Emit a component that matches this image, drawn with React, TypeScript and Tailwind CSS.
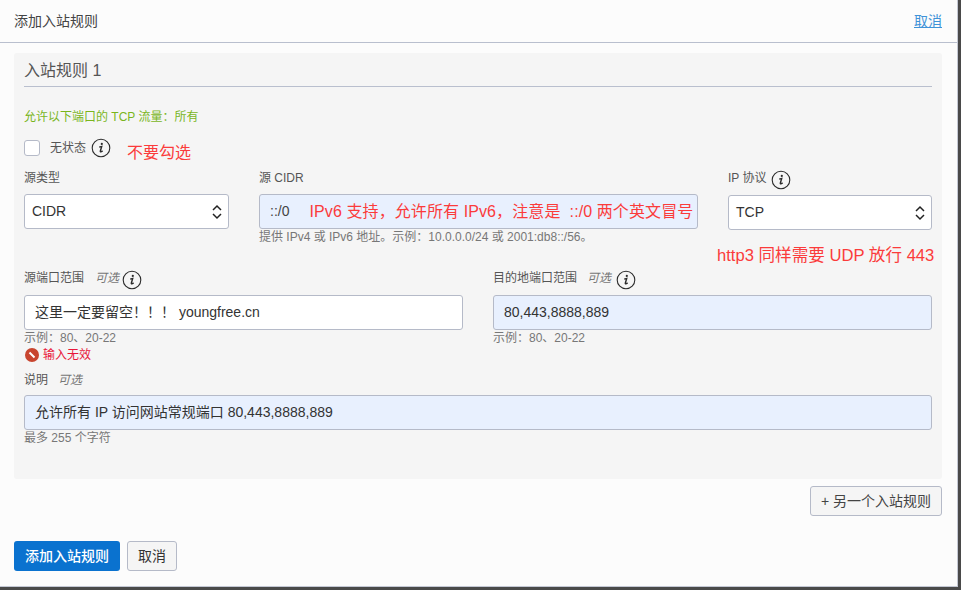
const font = "font-['Liberation_Sans','Noto_Sans_CJK_SC',sans-serif]"

function InfoIcon() {
  return (
    <svg width="20" height="20" viewBox="0 0 20 20" className="shrink-0">
      <circle cx="10" cy="10" r="8.8" fill="none" stroke="#2b2b2b" strokeWidth="1.1" />
      <circle cx="10.8" cy="5.9" r="1.1" fill="#2b2b2b" />
      <path d="M8.2 9.2 L10.7 8.5 L9.3 13.2 C9.2 14.1 9.9 14.3 11.6 12.9" fill="none" stroke="#2b2b2b" strokeWidth="1.4" />
    </svg>
  )
}

function Chevrons() {
  return (
    <svg width="10" height="16" viewBox="0 0 10 16" className="shrink-0">
      <path d="M1 6 L5 2 L9 6 M1 10 L5 14 L9 10" fill="none" stroke="#222" strokeWidth="1.5" />
    </svg>
  )
}

function Select({ value, width }: { value: string; width: string }) {
  return (
    <div className={`${width} h-[35px] flex items-center justify-between pl-[7px] pr-[6px] bg-white border border-[#b5bac8] rounded-[3px] text-[14px] text-[#333]`}>
      <span>{value}</span>
      <Chevrons />
    </div>
  )
}

export default function App() {
  return (
    <div className={`${font} w-[961px] h-[590px] overflow-hidden bg-[#4a4a4a]`}>
      <div className="w-[958px] h-[587px] bg-[#fcfcfc] border-r border-b border-[#c4c8d4] flex flex-col">
        {/* Header */}
        <div className="h-[43px] shrink-0 border-b border-[#b9bfce] flex items-center justify-between pl-[14px] pr-[15px]">
          <span className="text-[14px] text-[#444]">添加入站规则</span>
          <a className="text-[14px] text-[#3f93d8] underline">取消</a>
        </div>

        {/* Rule card */}
        <div className="mx-[14px] mt-[10px] w-[928px] h-[426px] shrink-0 bg-[#f5f5f5] rounded-[3px] px-[10px]">
          <div className="h-[34px] border-b border-[#b9bfce] flex items-end pb-[3px] text-[16px] text-[#555]">入站规则 1</div>
          <div className="mt-[22px] text-[12px] leading-[16px] text-[#7ab51d]">允许以下端口的 TCP 流量：所有</div>

          <div className="mt-[12px] flex items-center h-[22px]">
            <div className="w-[16px] h-[16px] bg-white border border-[#b5bac8] rounded-[3px]" />
            <span className="ml-[10px] text-[12px] text-[#555]">无状态</span>
            <span className="ml-[5px]"><InfoIcon /></span>
            <span className="ml-[16px] mt-[10px] text-[16px] text-[#fb3b3b] whitespace-nowrap">不要勾选</span>
          </div>

          <div className="mt-[10px] flex">
            <div className="w-[205px]">
              <div className="h-[25px] text-[12px] leading-[18px] text-[#555]">源类型</div>
              <Select value="CIDR" width="w-[205px]" />
            </div>
            <div className="ml-[30px] w-[439px]">
              <div className="h-[25px] text-[12px] leading-[18px] text-[#555]">源 CIDR</div>
              <div className="h-[35px] flex items-center pl-[10px] bg-[#e8f0fe] border border-[#b5bac8] rounded-[3px] text-[14px] text-[#444]">
                <span>::/0</span>
                <span className="ml-[20px] text-[16px] tracking-[0.1px] text-[#fb3b3b] whitespace-nowrap">IPv6 支持，允许所有 IPv6，注意是&nbsp; ::/0 两个英文冒号</span>
              </div>
              <div className="text-[12px] leading-[16px] text-[#777]">提供 IPv4 或 IPv6 地址。示例：10.0.0.0/24 或 2001:db8::/56。</div>
            </div>
            <div className="ml-[30px] w-[204px]">
              <div className="h-[26px] flex items-start gap-[5px] text-[12px] leading-[18px] text-[#555]">IP 协议 <span className="mt-[1px]"><InfoIcon /></span></div>
              <Select value="TCP" width="w-[204px]" />
              <div className="mt-[16px] ml-[-11px] text-[16.6px] leading-[20px] text-[#fb3b3b] whitespace-nowrap">http3 同样需要 UDP 放行 443</div>
            </div>
          </div>

          <div className="mt-[3px] flex gap-[30px]">
            <div className="w-[439px]">
              <div className="h-[26px] flex items-start text-[12px] leading-[18px] text-[#555]">
                <span>源端口范围</span>
                <span className="ml-[11px] italic text-[#777]">可选</span>
                <span className="ml-[3px] mt-[1px]"><InfoIcon /></span>
              </div>
              <div className="h-[35px] flex items-center pl-[10px] bg-white border border-[#b5bac8] rounded-[3px] text-[14px] text-[#333]">这里一定要留空！！！ youngfree.cn</div>
              <div className="text-[12px] leading-[16px] text-[#777]">示例：80、20-22</div>
              <div className="mt-[1px] flex items-center h-[16px] text-[12px] text-[#e8173a]">
                <svg width="14" height="14" viewBox="0 0 14 14" className="ml-[1px] mr-[4px]">
                  <circle cx="7" cy="7" r="7" fill="#c8452f" />
                  <path d="M4.5 4.5 L9.5 9.5" stroke="#fff" strokeWidth="2" />
                </svg>
                输入无效
              </div>
            </div>
            <div className="w-[439px]">
              <div className="h-[26px] flex items-start text-[12px] leading-[18px] text-[#555]">
                <span>目的地端口范围</span>
                <span className="ml-[10px] italic text-[#777]">可选</span>
                <span className="ml-[5px] mt-[1px]"><InfoIcon /></span>
              </div>
              <div className="h-[35px] flex items-center pl-[10px] bg-[#e8f0fe] border border-[#b5bac8] rounded-[3px] text-[14px] text-[#333]">80,443,8888,889</div>
              <div className="text-[12px] leading-[16px] text-[#777]">示例：80、20-22</div>
            </div>
          </div>

          <div className="mt-[8px] h-[24px] text-[12px] leading-[18px] text-[#555]">
            <span>说明</span>
            <span className="ml-[10px] italic text-[#777]">可选</span>
          </div>
          <div className="h-[35px] flex items-center pl-[10px] bg-[#e8f0fe] border border-[#b5bac8] rounded-[3px] text-[14px] text-[#333]">允许所有 IP 访问网站常规端口 80,443,8888,889</div>
          <div className="text-[12px] leading-[16px] text-[#777]">最多 255 个字符</div>
        </div>

        {/* Add another */}
        <div className="mt-[7px] flex justify-end pr-[15px]">
          <button className="w-[132px] h-[30px] bg-[#f5f5f5] border border-[#b5bac8] rounded-[3px] text-[14px] text-[#444]">+ 另一个入站规则</button>
        </div>

        {/* Footer */}
        <div className="mt-[25px] pl-[14px] flex gap-[7px]">
          <button className="w-[106px] h-[30px] bg-[#0a72cf] rounded-[3px] text-[14px] font-medium text-white">添加入站规则</button>
          <button className="w-[50px] h-[30px] bg-[#f5f5f5] border border-[#b5bac8] rounded-[3px] text-[14px] text-[#333]">取消</button>
        </div>
      </div>
    </div>
  )
}
